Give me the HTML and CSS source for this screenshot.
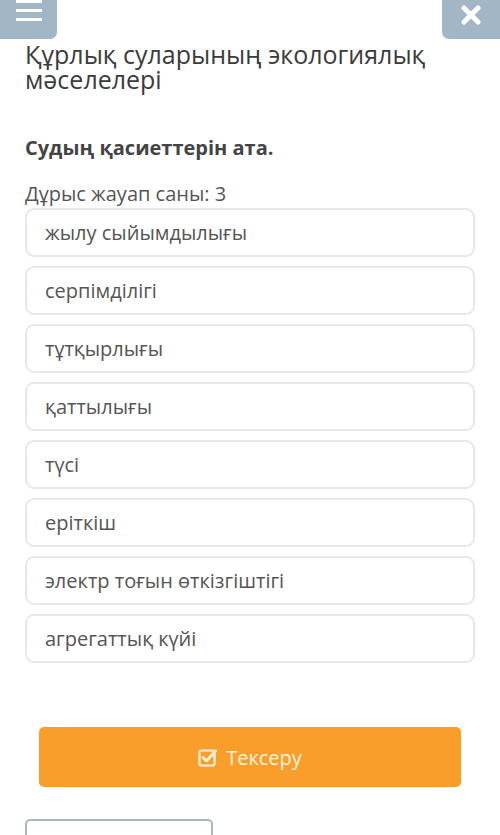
FILE: index.html
```html
<!DOCTYPE html>
<html lang="kk">
<head>
<meta charset="utf-8">
<link rel="stylesheet" href="styles.css">
</head>
<body>
<div class="header">
  <button class="hbtn menu" aria-label="menu">
    <svg width="26" height="22" viewBox="0 0 26 22"><rect x="0" y="0" width="26" height="3" fill="#fff"/><rect x="0" y="9" width="26" height="3" fill="#fff"/><rect x="0" y="18" width="26" height="3" fill="#fff"/></svg>
  </button>
  <button class="hbtn close" aria-label="close">
    <svg width="20" height="20" viewBox="0 0 20 20"><path d="M3 3 L17 17 M17 3 L3 17" stroke="#fff" stroke-width="5" stroke-linecap="round"/></svg>
  </button>
</div>
<div class="content">
  <h1 class="title">Құрлық суларының экологиялық мәселелері</h1>
  <p class="question">Судың қасиеттерін ата.</p>
  <p class="count">Дұрыс жауап саны: 3</p>
  <div class="options">
    <div class="option">жылу сыйымдылығы</div>
    <div class="option">серпімділігі</div>
    <div class="option">тұтқырлығы</div>
    <div class="option">қаттылығы</div>
    <div class="option">түсі</div>
    <div class="option">еріткіш</div>
    <div class="option">электр тоғын өткізгіштігі</div>
    <div class="option">агрегаттық күйі</div>
  </div>
  <div class="check-wrap">
    <button class="check">
      <svg width="19" height="19" viewBox="0 0 19 19"><rect x="1.5" y="2.5" width="15" height="15" rx="2" fill="none" stroke="#fff3dc" stroke-width="2.2"/><path d="M5 9.5 L8.5 13 L17.5 3" fill="none" stroke="#fff3dc" stroke-width="3" stroke-linecap="round" stroke-linejoin="round"/></svg>
      <span>Тексеру</span>
    </button>
  </div>
  <div class="outline-btn"></div>
</div>
</body>
</html>
```
FILE: styles.css
```css
* { box-sizing: border-box; }
html, body { margin: 0; padding: 0; background: #fff; overflow: hidden; height: 835px; }
body { font-family: "Open Sans", "Noto Sans", sans-serif; color: #555; }
.header { display: flex; justify-content: space-between; height: 39px; }
.hbtn { border: 0; padding: 0; background: #a3b6c6; height: 39px; display: flex; align-items: flex-start; justify-content: center; }
.menu { width: 57px; border-radius: 0 0 7px 0; }
.close { width: 58px; border-radius: 0 0 0 7px; padding-top: 5px; }
.content { padding: 0 25px; }
.title { margin: 3px 0 0; font-size: 25px; line-height: 25px; font-weight: 400; color: #3b3b3b; }
.question { margin: 44px 0 0; font-size: 20px; line-height: 24px; font-weight: 700; color: #444; }
.count { margin: 22px 0 0; font-size: 20px; line-height: 24px; color: #555; }
.options { margin-top: 2px; display: flex; flex-direction: column; gap: 9px; }
.option { height: 49px; border: 2px solid #e8e8e8; border-radius: 9px; padding: 0 18px; display: flex; align-items: center; font-size: 20px; color: #555; }
.check-wrap { padding: 0 14px; margin-top: 64px; }
.check { width: 100%; height: 60px; border: 0; border-radius: 5px; background: #fa9e2b; color: #fff3dc; font-family: inherit; font-size: 20px; display: flex; align-items: center; justify-content: center; gap: 9px; }
.outline-btn { margin-top: 32px; width: 188px; height: 40px; border: 2px solid #a9b7c1; border-radius: 5px; }
```
